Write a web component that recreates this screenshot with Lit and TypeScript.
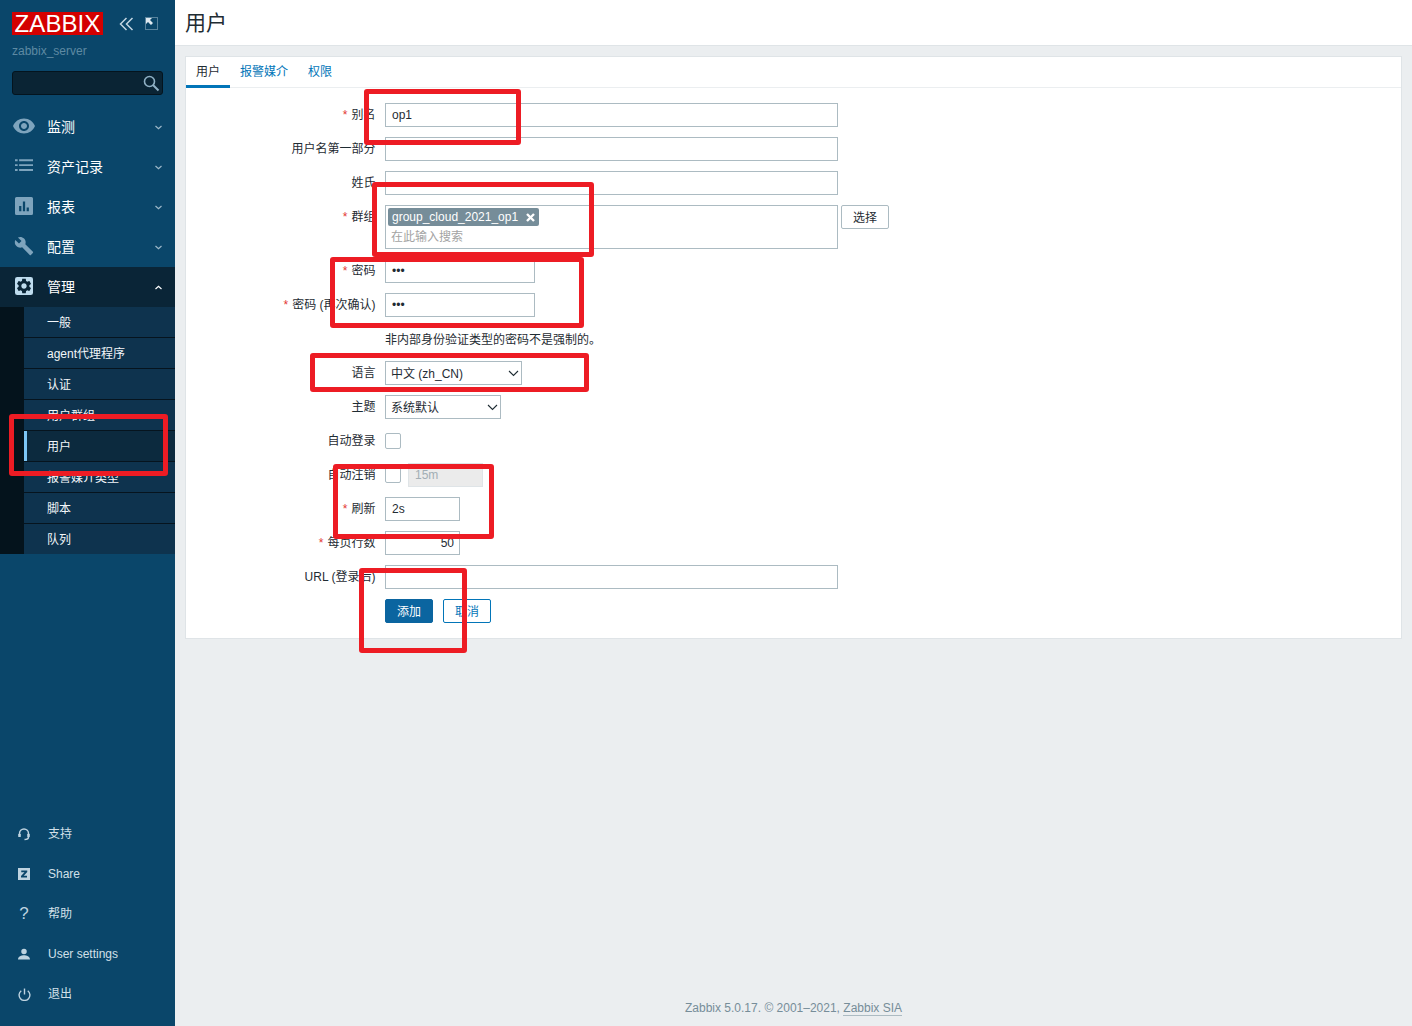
import { LitElement, html, css, svg } from "lit";
import { customElement } from "lit/decorators.js";

const P = {
  eye: "M12 4.500C7 4.500 2.730 7.610 1 12c1.730 4.390 6 7.500 11 7.500s9.270-3.110 11-7.500c-1.730-4.390-6-7.500-11-7.500zM12 17c-2.760 0-5-2.240-5-5s2.240-5 5-5 5 2.240 5 5-2.240 5-5 5zm0-8c-1.660 0-3 1.340-3 3s1.340 3 3 3 3-1.340 3-3-1.340-3-3-3z",
  list: "M0 3h3.500v2.500H0zM5.500 3H24v2.500H5.500zM0 9.500h3.500V12H0zM5.500 9.500H24V12H5.500zM0 16h3.500v2.500H0zM5.500 16H24v2.500H5.500z",
  chart: "M2 0h20a2 2 0 0 1 2 2v20a2 2 0 0 1-2 2H2a2 2 0 0 1-2-2V2a2 2 0 0 1 2-2zM5.500 12v7h3v-7zM10.500 6v13h3V6zM15.500 14v5h3v-5z",
  wrench: "M22.700 19l-9.100-9.100c.9-2.300.4-5-1.500-6.900-2-2-5-2.400-7.400-1.300L9 6 6 9 1.600 4.700C.4 7.100.9 10.100 2.900 12.100c1.900 1.900 4.600 2.400 6.900 1.500l9.100 9.100c.4.4 1 .4 1.400 0l2.300-2.300c.5-.4.5-1.100.1-1.400z",
  gear: "M19.140 12.940c.04-.3.06-.61.06-.94 0-.32-.02-.64-.07-.94l2.030-1.580c.18-.14.23-.41.12-.61l-1.920-3.320c-.12-.22-.37-.29-.59-.22l-2.390.96c-.5-.38-1.030-.7-1.620-.94l-.36-2.540c-.04-.24-.24-.41-.48-.41h-3.840c-.24 0-.43.17-.47.41l-.36 2.540c-.59.24-1.130.57-1.620.94l-2.390-.96c-.22-.08-.47 0-.59.22L2.740 8.870c-.12.21-.08.47.12.61l2.030 1.580c-.05.3-.09.63-.09.94s.02.64.07.94l-2.030 1.580c-.18.14-.23.41-.12.61l1.920 3.320c.12.22.37.29.59.22l2.390-.96c.5.38 1.030.7 1.620.94l.36 2.540c.05.24.24.41.48.41h3.840c.24 0 .44-.17.47-.41l.36-2.540c.59-.24 1.130-.56 1.620-.94l2.390.96c.22.08.47 0 .59-.22l1.920-3.320c.12-.22.07-.47-.12-.61l-2.010-1.580zM12 15.600c-1.980 0-3.600-1.620-3.600-3.600s1.620-3.600 3.600-3.600 3.600 1.620 3.600 3.600-1.620 3.600-3.600 3.600z",
  user: "M12 1.500a5.500 5.500 0 1 1 0 11 5.500 5.500 0 0 1 0-11zM0 23c0-6 7-8.500 12-8.500S24 17 24 23z",
  zbox: "M0 0h24v24H0zM6.500 5v3.500h6.500L6 16v3h12v-3.500h-6.500L18.500 8V5z",
};

const mainItems = [
  { t: "监测", i: "eye", s: 24 },
  { t: "资产记录", i: "list", s: 18 },
  { t: "报表", i: "chart", s: 18 },
  { t: "配置", i: "wrench", s: 20 },
];
const subItems = ["一般", "agent代理程序", "认证", "用户群组", "用户", "报警媒介类型", "脚本", "队列"];
const boxes = [
  [364, 89, 157, 56],
  [372, 182, 222, 75],
  [330, 257, 254, 71],
  [310, 353, 279, 39],
  [333, 464, 161, 75],
  [359, 568, 108, 85],
  [9, 414, 159, 62],
];

@customElement("app-root")
export class AppRoot extends LitElement {
  static styles = css`
    :host {
      display: flex;
      position: relative;
      height: 1026px;
      overflow: hidden;
      background: #ebeef0;
      color: #1f2c33;
      font: 12px/14px "Liberation Sans", "Noto Sans CJK SC", sans-serif;
    }
    * { box-sizing: border-box; }
    svg { display: block; flex: none; }

    .side { width: 175px; flex: none; background: #0a466a; display: flex; flex-direction: column; }
    .brand { display: flex; align-items: center; height: 23px; margin: 12px 0 9px 12px; }
    .logo { width: 91px; height: 23px; background: #d40000; color: #fff; font-size: 24px; line-height: 24px; letter-spacing: 0.1px; text-align: center; font-weight: 400; }
    .collapse { margin-left: 16px; }
    .fs { margin-left: 11px; }
    .host { height: 17px; padding-left: 12px; color: #5e8aa3; line-height: 14px; }
    .search { margin: 10px 12px 12px; height: 24px; background: #0a2434; border: 1px solid #04141e; border-radius: 3px; display: flex; justify-content: flex-end; align-items: center; padding-right: 2px; }
    .item { height: 40px; display: flex; align-items: center; color: #fff; font-size: 14px; font-weight: 400; }
    .item .ic { width: 47px; display: flex; justify-content: center; margin-bottom: 2px; flex: none; }
    .item .lbl { flex: 1; }
    .item .chev { margin-right: 13px; }
    .item.open { background: #0a2537; }
    .sub { background: #04131c; padding-left: 24px; }
    .subitem { height: 31px; display: flex; align-items: center; padding: 1px 0 0 23px; background: #0e334e; color: #f2f6f9; border-bottom: 1px solid #06141e; }
    .subitem:last-child { height: 30px; border-bottom: 0; }
    .subitem.sel { background: #0c2a3e; box-shadow: inset 3px 0 0 #7dc6f5; }
    .spacer { flex: 1; }
    .bottom { padding-bottom: 12px; }
    .bitem { height: 40px; display: flex; align-items: center; color: #d2e0e9; }
    .bitem .bi { width: 48px; display: flex; justify-content: center; flex: none; color: #bed3e0; }
    .q { font-size: 17px; color: #bed3e0; }

    .main { flex: 1; display: flex; flex-direction: column; min-width: 0; }
    .head { height: 46px; background: #fff; border-bottom: 1px solid #dfe4e7; padding: 1px 10px 0; display: flex; align-items: center; font-size: 21px; font-weight: 400; }
    .panel { margin: 10px 10px 0; background: #fff; border: 1px solid #dfe4e7; height: 583px; }
    .tabs { display: flex; height: 31px; border-bottom: 1px solid #ebeef0; }
    .tab { padding: 0 10px; height: 31px; line-height: 31px; color: #0275b8; }
    .tab.on { color: #1f2c33; border-bottom: 3px solid #0275b8; }
    .form { display: grid; grid-template-columns: 189.500px 1fr; column-gap: 9.500px; row-gap: 10px; padding-top: 15px; }
    .lab { height: 24px; line-height: 25px; text-align: right; white-space: nowrap; }
    .star { color: #e33734; margin-right: 4px; }
    .ctl { display: flex; align-items: center; min-height: 24px; }
    .in { height: 24px; border: 1px solid #acbbc2; background: #fff; padding: 0 5px 0 6px; font: inherit; color: #1f2c33; line-height: 22px; display: block; outline: 0; margin: 0; }
    .note { padding-top: 1px; }
    .w453 { width: 453px; }
    .w150 { width: 150px; }
    .w75 { width: 75px; }
    .right { text-align: right; }
    .multi { width: 453px; height: 44px; border: 1px solid #acbbc2; padding: 2px; align-self: flex-start; }
    .tag { display: flex; align-items: center; height: 18px; width: 151px; background: #768d99; color: #fff; border-radius: 2px; padding: 0 0 0 4px; }
    .tag span { flex: 1; }
    .tag svg { margin-right: 4px; }
    .ph { color: #a3a3a3; line-height: 14px; padding: 4px 0 0 3px; }
    .btn { height: 24px; border: 1px solid #acbbc2; border-radius: 2px; background: #fff; width: 48px; margin-left: 3px; display: flex; align-items: center; justify-content: center; align-self: flex-start; padding-top: 1px; }
    .select { height: 24px; border: 1px solid #acbbc2; background: #fff; padding: 1px 2px 0 5px; display: flex; align-items: center; justify-content: space-between; }
    .check { width: 16px; height: 16px; border: 1px solid #acbbc2; border-radius: 2px; background: #fff; }
    .dis { margin-left: 7px; background: #ebebeb; color: #a2aeb5; border-color: #dfe4e7; }
    .actions { display: flex; gap: 10px; }
    .b { width: 48px; height: 24px; border: 1px solid #0275b8; border-radius: 2px; display: flex; align-items: center; justify-content: center; color: #0275b8; background: #fff; padding-top: 1px; }
    .b.pri { background: #0b65a0; border-color: #0b65a0; color: #fff; }
    .gap { flex: 1; }
    .foot { height: 25px; text-align: center; color: #768d99; line-height: 14px; }
    .foot a { color: #768d99; border-bottom: 1px solid #acbbc2; text-decoration: none; }
    .mark { position: absolute; border: 5px solid #ed1c24; border-radius: 3px; pointer-events: none; }
  `;

  private icon(name: string, size: number, color: string) {
    return html`<svg width=${size} height=${size} viewBox="0 0 24 24" fill=${color}>${svg`<path fill-rule="evenodd" d=${(P as any)[name]}></path>`}</svg>`;
  }

  private chev(up = false, color = "#9db8c9") {
    return html`<svg class="chev" width="7" height="5" viewBox="0 0 7 5" fill="none" stroke=${color} stroke-width="1.200">
      ${up ? svg`<path d="M.5 4L3.500 1.200 6.500 4"></path>` : svg`<path d="M.5 1L3.500 3.800 6.500 1"></path>`}
    </svg>`;
  }

  private field(label: string, req: boolean, body: unknown) {
    return html`<div class="lab">${req ? html`<span class="star">*</span>` : ""}${label}</div><div class="ctl">${body}</div>`;
  }

  private selectChev() {
    return html`<svg width="11" height="7" viewBox="0 0 11 7" fill="none" stroke="#1f2c33" stroke-width="1.100"><path d="M1 1l4.500 4.500L10 1"></path></svg>`;
  }

  render() {
    return html`
      <aside class="side">
        <div class="brand">
          <div class="logo">ZABBIX</div>
          <svg class="collapse" width="15" height="14" viewBox="0 0 15 14" fill="none" stroke="#c3d6e2" stroke-width="1.500"><path d="M7.500 1L1.500 7l6 6M13.500 1l-6 6 6 6"></path></svg>
          <svg class="fs" width="13" height="13" viewBox="0 0 13 13" fill="none"><rect x=".5" y=".5" width="12" height="12" stroke="#a9c2d2" stroke-dasharray="1 1"></rect><path d="M1 1h6L5 3l3 3-2 2-3-3-2 2z" fill="#dfe9f0"></path></svg>
        </div>
        <div class="host">zabbix_server</div>
        <div class="search">
          <svg width="18" height="18" viewBox="0 0 18 18" fill="none" stroke="#8fb0c4" stroke-width="1.600"><circle cx="7.500" cy="7.500" r="5"></circle><path d="M11 11l5.500 5.500" stroke-width="2"></path></svg>
        </div>
        ${mainItems.map(
          (m) => html`<div class="item">
            <div class="ic">${this.icon(m.i, m.s, "#7ea4bd")}</div>
            <div class="lbl">${m.t}</div>
            ${this.chev()}
          </div>`
        )}
        <div class="item open">
          <div class="ic">
            <svg width="18" height="18" viewBox="0 0 24 24">
              <rect width="24" height="24" rx="3" fill="#bfdcee"></rect>
              <path fill="#0a2537" fill-rule="evenodd" d=${P.gear}></path>
            </svg>
          </div>
          <div class="lbl">管理</div>
          ${this.chev(true, "#ffffff")}
        </div>
        <div class="sub">
          ${subItems.map((s) => html`<div class="subitem ${s === "用户" ? "sel" : ""}">${s}</div>`)}
        </div>
        <div class="spacer"></div>
        <div class="bottom">
          <div class="bitem"><div class="bi"><svg width="12" height="13" viewBox="0 0 24 26" fill="none" stroke="#bed3e0" stroke-width="3"><path d="M3 15v-4a9 9 0 0 1 18 0v4"></path><path d="M3 12v6M21 12v6" stroke-width="5"></path><path d="M21 18c0 3-3 5-8 5"></path></svg></div>支持</div>
          <div class="bitem"><div class="bi">${this.icon("zbox", 12, "#bed3e0")}</div>Share</div>
          <div class="bitem"><div class="bi"><span class="q">?</span></div>帮助</div>
          <div class="bitem"><div class="bi">${this.icon("user", 12, "#bed3e0")}</div>User settings</div>
          <div class="bitem"><div class="bi"><svg width="13" height="13" viewBox="0 0 24 24" fill="none" stroke="#bed3e0" stroke-width="2.600"><path d="M12 1v11"></path><path d="M6 5a10 10 0 1 0 12 0"></path></svg></div>退出</div>
        </div>
      </aside>
      <div class="main">
        <div class="head">用户</div>
        <div class="panel">
          <div class="tabs">
            <div class="tab on">用户</div>
            <div class="tab">报警媒介</div>
            <div class="tab">权限</div>
          </div>
          <div class="form">
            ${this.field("别名", true, html`<input class="in w453" value="op1" />`)}
            ${this.field("用户名第一部分", false, html`<input class="in w453" />`)}
            ${this.field("姓氏", false, html`<input class="in w453" />`)}
            ${this.field("群组", true, html`
              <div class="multi">
                <div class="tag"><span>group_cloud_2021_op1</span>
                  <svg width="9" height="9" viewBox="0 0 9 9" stroke="#fff" stroke-width="2.400"><path d="M1 1l7 7M8 1L1 8"></path></svg>
                </div>
                <div class="ph">在此输入搜索</div>
              </div>
              <div class="btn">选择</div>`)}
            ${this.field("密码", true, html`<input class="in w150" type="password" value="abc" />`)}
            ${this.field("密码 (再次确认)", true, html`<input class="in w150" type="password" value="abc" />`)}
            ${this.field("", false, html`<div class="note">非内部身份验证类型的密码不是强制的。</div>`)}
            ${this.field("语言", false, html`<div class="select" style="width:137px"><span>中文 (zh_CN)</span>${this.selectChev()}</div>`)}
            ${this.field("主题", false, html`<div class="select" style="width:116px"><span>系统默认</span>${this.selectChev()}</div>`)}
            ${this.field("自动登录", false, html`<div class="check"></div>`)}
            ${this.field("自动注销", false, html`<div class="check"></div><div class="in w75 dis">15m</div>`)}
            ${this.field("刷新", true, html`<input class="in w75" value="2s" />`)}
            ${this.field("每页行数", true, html`<input class="in w75 right" value="50" />`)}
            ${this.field("URL (登录后)", false, html`<input class="in w453" />`)}
            <div></div>
            <div class="actions">
              <div class="b pri">添加</div>
              <div class="b">取消</div>
            </div>
          </div>
        </div>
        <div class="gap"></div>
        <div class="foot">Zabbix 5.0.17. © 2001–2021, <a>Zabbix SIA</a></div>
      </div>
      ${boxes.map(
        ([x, y, w, h]) => html`<div class="mark" style="left:${x}px;top:${y}px;width:${w}px;height:${h}px"></div>`
      )}
    `;
  }
}
